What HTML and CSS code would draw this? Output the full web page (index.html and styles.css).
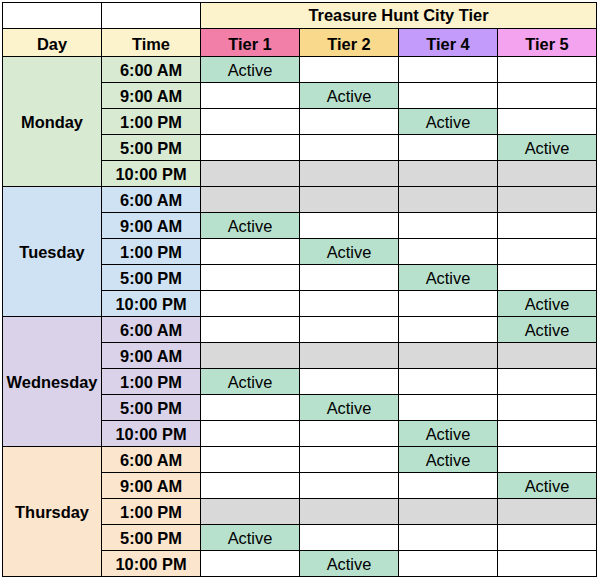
FILE: index.html
```html
<!DOCTYPE html>
<html>
<head>
<meta charset="utf-8">
<link rel="stylesheet" href="styles.css">
</head>
<body>
<div class="sheet">
  <div class="c blank"></div>
  <div class="c blank"></div>
  <div class="c title">Treasure Hunt City Tier</div>

  <div class="c head">Day</div>
  <div class="c head">Time</div>
  <div class="c head t1">Tier 1</div>
  <div class="c head t2">Tier 2</div>
  <div class="c head t4">Tier 4</div>
  <div class="c head t5">Tier 5</div>

  <div class="c day mon">Monday</div>
  <div class="c time mon">6:00 AM</div><div class="c act">Active</div><div class="c"></div><div class="c"></div><div class="c"></div>
  <div class="c time mon">9:00 AM</div><div class="c"></div><div class="c act">Active</div><div class="c"></div><div class="c"></div>
  <div class="c time mon">1:00 PM</div><div class="c"></div><div class="c"></div><div class="c act">Active</div><div class="c"></div>
  <div class="c time mon">5:00 PM</div><div class="c"></div><div class="c"></div><div class="c"></div><div class="c act">Active</div>
  <div class="c time mon">10:00 PM</div><div class="c off"></div><div class="c off"></div><div class="c off"></div><div class="c off"></div>

  <div class="c day tue">Tuesday</div>
  <div class="c time tue">6:00 AM</div><div class="c off"></div><div class="c off"></div><div class="c off"></div><div class="c off"></div>
  <div class="c time tue">9:00 AM</div><div class="c act">Active</div><div class="c"></div><div class="c"></div><div class="c"></div>
  <div class="c time tue">1:00 PM</div><div class="c"></div><div class="c act">Active</div><div class="c"></div><div class="c"></div>
  <div class="c time tue">5:00 PM</div><div class="c"></div><div class="c"></div><div class="c act">Active</div><div class="c"></div>
  <div class="c time tue">10:00 PM</div><div class="c"></div><div class="c"></div><div class="c"></div><div class="c act">Active</div>

  <div class="c day wed">Wednesday</div>
  <div class="c time wed">6:00 AM</div><div class="c"></div><div class="c"></div><div class="c"></div><div class="c act">Active</div>
  <div class="c time wed">9:00 AM</div><div class="c off"></div><div class="c off"></div><div class="c off"></div><div class="c off"></div>
  <div class="c time wed">1:00 PM</div><div class="c act">Active</div><div class="c"></div><div class="c"></div><div class="c"></div>
  <div class="c time wed">5:00 PM</div><div class="c"></div><div class="c act">Active</div><div class="c"></div><div class="c"></div>
  <div class="c time wed">10:00 PM</div><div class="c"></div><div class="c"></div><div class="c act">Active</div><div class="c"></div>

  <div class="c day thu">Thursday</div>
  <div class="c time thu">6:00 AM</div><div class="c"></div><div class="c"></div><div class="c act">Active</div><div class="c"></div>
  <div class="c time thu">9:00 AM</div><div class="c"></div><div class="c"></div><div class="c"></div><div class="c act">Active</div>
  <div class="c time thu">1:00 PM</div><div class="c off"></div><div class="c off"></div><div class="c off"></div><div class="c off"></div>
  <div class="c time thu">5:00 PM</div><div class="c act">Active</div><div class="c"></div><div class="c"></div><div class="c"></div>
  <div class="c time thu">10:00 PM</div><div class="c"></div><div class="c act">Active</div><div class="c"></div><div class="c"></div>
</div>
</body>
</html>
```

FILE: styles.css
```css
html, body {
  margin: 0;
  padding: 0;
  background: #ffffff;
}

.sheet {
  margin: 2px 0 0 2px;
  display: grid;
  grid-template-columns: repeat(6, 98px);
  grid-template-rows: 25px 27px repeat(20, 25px);
  gap: 1px;
  padding: 1px;
  width: max-content;
  background: #000000;
  font-family: "Liberation Sans", Arial, sans-serif;
  font-size: 16.4px;
  color: #000000;
}

.c {
  background: #ffffff;
  display: flex;
  align-items: center;
  justify-content: center;
  white-space: nowrap;
  line-height: 1;
  padding-top: 2px;
}

.title {
  grid-column: 3 / span 4;
  background: #fcf2cc;
  font-weight: bold;
  padding-top: 0;
}

.head {
  background: #fcf2cc;
  font-weight: bold;
  padding-top: 4px;
}

.t1 { background: #f27fa7; }
.t2 { background: #f9d98b; }
.t4 { background: #c39cfb; }
.t5 { background: #f4a3ee; }

.day {
  grid-row: span 5;
  font-weight: bold;
}

.time {
  font-weight: bold;
}

.mon { background: #d9ead3; }
.tue { background: #cfe2f3; }
.wed { background: #d9d2e9; }
.thu { background: #fce5cd; }

.act { background: #b7e1cd; }
.off { background: #d9d9d9; }
```
